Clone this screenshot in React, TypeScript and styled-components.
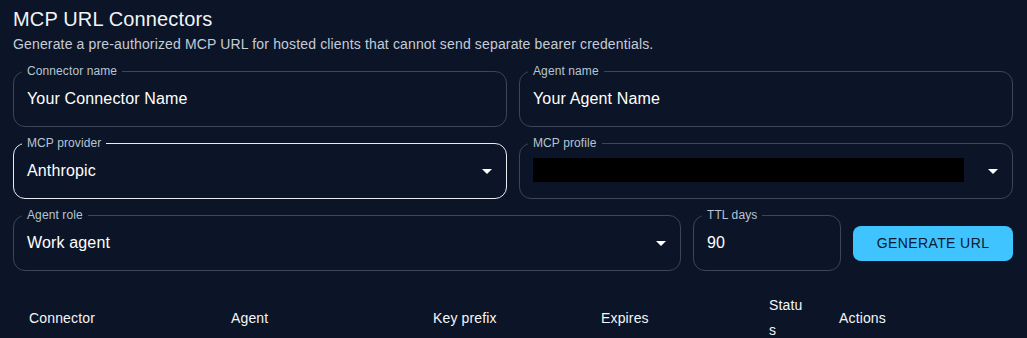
import React from 'react';
import styled, { createGlobalStyle } from 'styled-components';

const bg = '#0b1527';

const Global = createGlobalStyle`
	body {
		margin: 0;
		background: ${bg};
		font-family: "Liberation Sans", Arial, sans-serif;
		color: #eef2f7;
	}
`;

const Page = styled.main`
	padding: 7px 14px 0 13px;
	height: 338px;
	box-sizing: border-box;
	overflow: hidden;
`;

const Title = styled.h2`
	margin: 0;
	font-size: 20px;
	line-height: 24px;
	font-weight: 400;
	letter-spacing: 0.15px;
	color: #f1f4f8;
`;

const Subtitle = styled.p`
	margin: 3px 0 0;
	font-size: 14px;
	line-height: 20px;
	letter-spacing: 0.15px;
	color: #c5ccd7;
`;

const Form = styled.div`
	margin-top: 17px;
	display: flex;
	flex-direction: column;
	gap: 16px;
`;

const Row = styled.div`
	display: flex;
	align-items: center;
	gap: 12px;
`;

const Field = styled.div<{ $active?: boolean; $width?: number }>`
	position: relative;
	box-sizing: border-box;
	height: 56px;
	flex: ${p => (p.$width ? `0 0 ${p.$width}px` : '1 1 0')};
	display: flex;
	align-items: center;
	padding: 0 7px 0 13px;
	border: 1px solid ${p => (p.$active ? '#e9edf2' : '#3b4658')};
	border-radius: 12px;
`;

const Label = styled.span`
	position: absolute;
	top: -8px;
	left: 8px;
	padding: 0 5px;
	background: ${bg};
	font-size: 12px;
	line-height: 14px;
	letter-spacing: 0.1px;
	color: #b9c4d2;
`;

const Value = styled.span`
	flex: 1;
	font-size: 16px;
	line-height: 20px;
	letter-spacing: 0.15px;
	color: #ffffff;
	margin-top: -1px;
`;

const Redacted = styled.span`
	display: block;
	width: 431px;
	height: 24px;
	background: #000;
	margin-right: auto;
	margin-top: -2px;
`;

const Button = styled.button`
	flex: 0 0 160px;
	height: 35px;
	border: none;
	border-radius: 8px;
	background: #40c4ff;
	color: #0b1a2c;
	font-family: inherit;
	font-size: 14px;
	letter-spacing: 0.4px;
	text-transform: uppercase;
	cursor: pointer;
`;

const Table = styled.table`
	margin-top: 6px;
	width: 1000px;
	table-layout: fixed;
	border-collapse: collapse;
`;

const Th = styled.th`
	padding: 16px;
	text-align: left;
	font-size: 14px;
	line-height: 25px;
	font-weight: 400;
	letter-spacing: 0.15px;
	color: #f4f6f9;
	word-break: break-all;
`;

const Arrow = () => (
	<svg width="24" height="24" viewBox="0 0 24 24" fill="#ffffff">
		<path d="M7 10l5 5 5-5z" />
	</svg>
);

const columns: [string, number][] = [
	['Connector', 202],
	['Agent', 202],
	['Key prefix', 168],
	['Expires', 168],
	['Status', 70],
	['Actions', 190],
];

export default function App() {
	return (
		<Page>
			<Global />
			<Title>MCP URL Connectors</Title>
			<Subtitle>Generate a pre-authorized MCP URL for hosted clients that cannot send separate bearer credentials.</Subtitle>
			<Form>
				<Row>
					<Field>
						<Label>Connector name</Label>
						<Value>Your Connector Name</Value>
					</Field>
					<Field>
						<Label>Agent name</Label>
						<Value>Your Agent Name</Value>
					</Field>
				</Row>
				<Row>
					<Field $active>
						<Label>MCP provider</Label>
						<Value>Anthropic</Value>
						<Arrow />
					</Field>
					<Field>
						<Label>MCP profile</Label>
						<Redacted />
						<Arrow />
					</Field>
				</Row>
				<Row>
					<Field>
						<Label>Agent role</Label>
						<Value>Work agent</Value>
						<Arrow />
					</Field>
					<Field $width={148}>
						<Label>TTL days</Label>
						<Value>90</Value>
					</Field>
					<Button>Generate URL</Button>
				</Row>
			</Form>
			<Table>
				<colgroup>
					{columns.map(([name, w]) => (
						<col key={name} style={{ width: w }} />
					))}
				</colgroup>
				<thead>
					<tr>
						{columns.map(([name]) => (
							<Th key={name}>{name}</Th>
						))}
					</tr>
				</thead>
			</Table>
		</Page>
	);
}
